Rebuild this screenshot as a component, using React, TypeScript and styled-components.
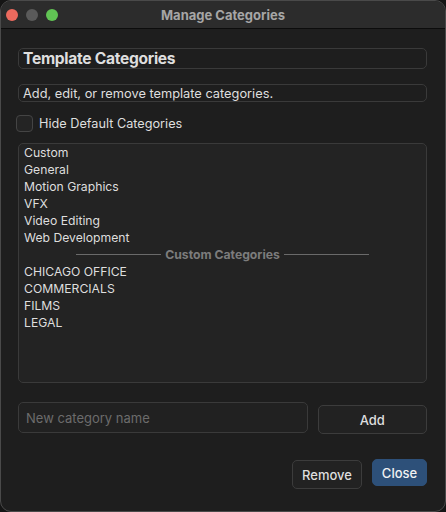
import React from 'react';
import styled, { createGlobalStyle } from 'styled-components';

//?-------------- variables ------------------//
const winBg = '#1e1e1e';
const barBg = '#2c2c2c';
const listBg = '#232323';
const edge = '#3a3a3a';
const text = '#dedede';
const dim = '#7c7c7c';
const font = `Inter, "Noto Sans", "Liberation Sans", sans-serif`;

const GlobalStyle = createGlobalStyle`
  html, body {
    margin: 0;
    padding: 0;
    background: #151515;
  }
  body {
    font-family: ${font};
    -webkit-font-smoothing: antialiased;
  }
`;

const Window = styled.div`
  width: 446px;
  height: 512px;
  box-sizing: border-box;
  background: ${winBg};
  border: 1px solid #4a4a4a;
  border-radius: 11px;
  overflow: hidden;
  display: flex;
  flex-direction: column;
`;

const TitleBar = styled.div`
  height: 27px;
  flex: none;
  background: ${barBg};
  border-bottom: 1px solid #0c0c0c;
  display: flex;
  align-items: center;
  position: relative;
`;

const Lights = styled.div`
  display: flex;
  gap: 8px;
  padding-left: 5px;
`;

const Light = styled.span<{ $c: string }>`
  width: 12px;
  height: 12px;
  border-radius: 50%;
  background: ${(p) => p.$c};
`;

const WinTitle = styled.div`
  position: absolute;
  left: 0;
  right: 0;
  text-align: center;
  font-size: 13px;
  font-weight: 700;
  color: #a6a6a6;
  pointer-events: none;
`;

const Body = styled.div`
  flex: 1;
  display: flex;
  flex-direction: column;
  padding: 19px 18px 0 17px;
`;

const Field = styled.div<{ $h: number; $size: number; $bold?: boolean }>`
  height: ${(p) => p.$h}px;
  box-sizing: border-box;
  border: 1px solid ${edge};
  border-radius: 5px;
  display: flex;
  align-items: center;
  padding-left: 4px;
  font-size: ${(p) => p.$size}px;
  font-weight: ${(p) => (p.$bold ? 700 : 400)};
  color: ${text};
  letter-spacing: ${(p) => (p.$bold ? '-0.3px' : '0')};
`;

const Gap = styled.div<{ $h: number }>`
  height: ${(p) => p.$h}px;
  flex: none;
`;

const CheckRow = styled.label`
  margin-top: 13px;
  margin-left: -2px;
  display: flex;
  align-items: center;
  gap: 6px;
  font-size: 12.7px;
  color: ${text};
`;

const Box = styled.span`
  width: 17px;
  height: 17px;
  box-sizing: border-box;
  border: 1px solid #444;
  border-radius: 4px;
  background: #242424;
`;

const List = styled.div`
  margin-top: 11px;
  height: 240px;
  box-sizing: border-box;
  background: ${listBg};
  border: 1px solid ${edge};
  border-radius: 5px;
  padding: 0 5px;
  display: flex;
  flex-direction: column;
`;

const Item = styled.div`
  height: 17px;
  line-height: 17px;
  font-size: 12.2px;
  color: ${text};
`;

const Divider = styled.div`
  height: 17px;
  display: flex;
  align-items: center;
  justify-content: center;
  gap: 4px;
  font-size: 12.2px;
  font-weight: 700;
  color: ${dim};
  &::before,
  &::after {
    content: '';
    width: 85px;
    height: 1px;
    background: #6a6a6a;
  }
`;

const AddRow = styled.div`
  margin-top: 19px;
  display: flex;
  align-items: flex-start;
  gap: 10px;
`;

const Input = styled.div`
  width: 291px;
  height: 31px;
  box-sizing: border-box;
  border: 1px solid ${edge};
  border-radius: 5px;
  background: #212121;
  display: flex;
  align-items: center;
  padding-left: 7px;
  font-size: 13px;
  color: #6c6c6c;
`;

const Button = styled.button<{ $w: number; $h: number; $top?: number; $primary?: boolean }>`
  width: ${(p) => p.$w}px;
  height: ${(p) => p.$h}px;
  margin-top: ${(p) => p.$top ?? 0}px;
  box-sizing: border-box;
  border-radius: 5px;
  border: 1px solid ${(p) => (p.$primary ? '#2d5079' : '#3c3c3c')};
  background: ${(p) => (p.$primary ? '#2d5079' : '#222')};
  color: ${(p) => (p.$primary ? '#f2f2f2' : text)};
  font-family: ${font};
  font-size: 13px;
  font-weight: 500;
  padding: 0;
`;

const Footer = styled.div`
  margin-top: 25px;
  display: flex;
  justify-content: flex-end;
  align-items: flex-start;
  gap: 10px;
`;

const defaults = ['Custom', 'General', 'Motion Graphics', 'VFX', 'Video Editing', 'Web Development'];
const customs = ['CHICAGO OFFICE', 'COMMERCIALS', 'FILMS', 'LEGAL'];

export default function App() {
  return (
    <>
      <GlobalStyle />
      <Window>
        <TitleBar>
          <Lights>
            <Light $c="#ec6a5e" />
            <Light $c="#5a5a5a" />
            <Light $c="#61c454" />
          </Lights>
          <WinTitle>Manage Categories</WinTitle>
        </TitleBar>
        <Body>
          <Field $h={21} $size={15.6} $bold>
            Template Categories
          </Field>
          <Gap $h={15} />
          <Field $h={18} $size={12.8}>
            Add, edit, or remove template categories.
          </Field>
          <CheckRow>
            <Box />
            Hide Default Categories
          </CheckRow>
          <List>
            {defaults.map((d) => (
              <Item key={d}>{d}</Item>
            ))}
            <Divider>Custom Categories</Divider>
            {customs.map((c) => (
              <Item key={c}>{c}</Item>
            ))}
          </List>
          <AddRow>
            <Input>New category name</Input>
            <Button $w={110} $h={29} $top={3}>
              Add
            </Button>
          </AddRow>
          <Footer>
            <Button $w={70} $h={29} $top={1}>
              Remove
            </Button>
            <Button $w={55} $h={27} $primary>
              Close
            </Button>
          </Footer>
        </Body>
      </Window>
    </>
  );
}
